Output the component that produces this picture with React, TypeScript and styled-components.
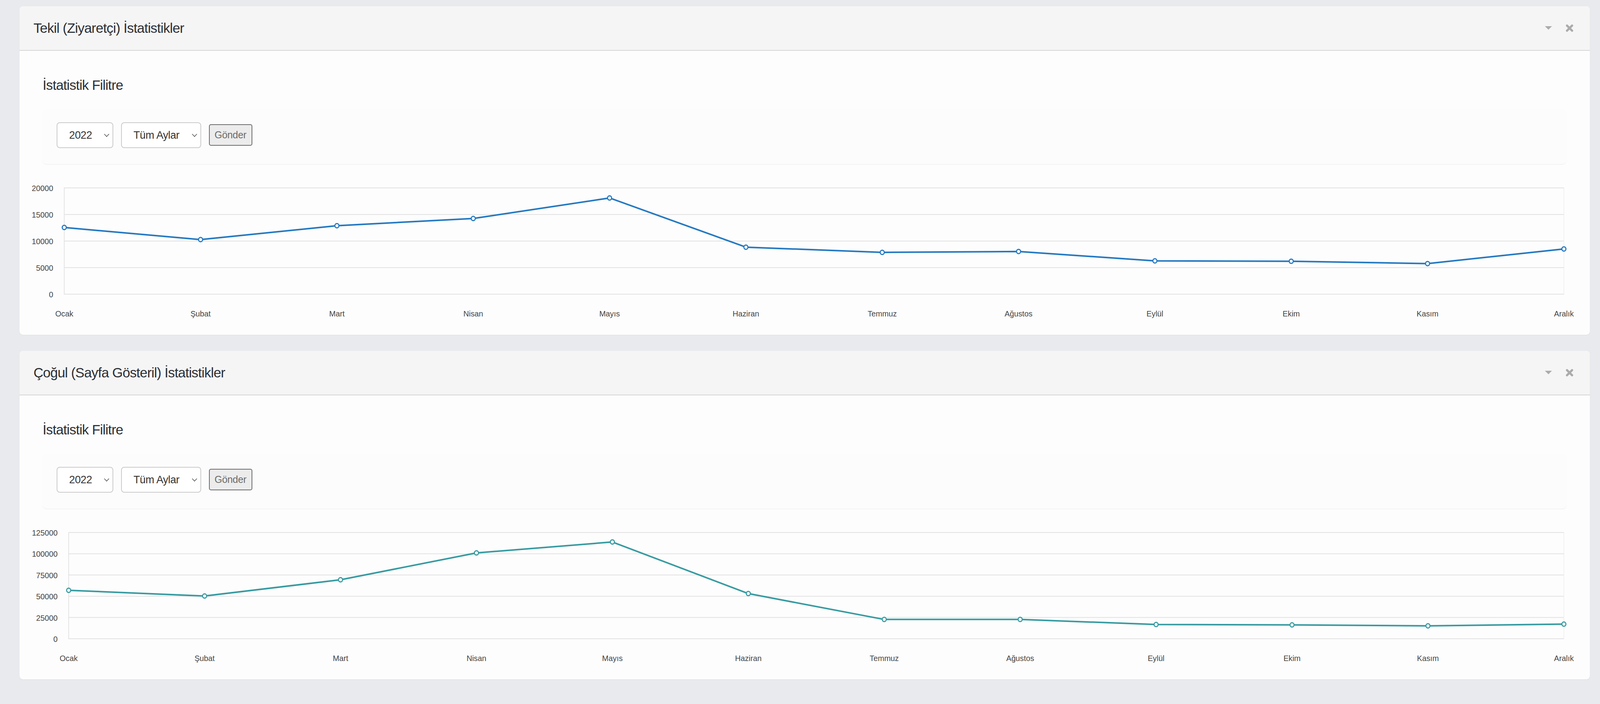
import React from 'react';
import styled, { createGlobalStyle } from 'styled-components';

// horizontal measures follow the 4352px-wide design, expressed relative to the viewport width
const vw = (px: number) => `${((px * 100) / 4352).toFixed(4)}vw`;

const GlobalStyle = createGlobalStyle`
  html, body {
    margin: 0;
    padding: 0;
    background: #e9eaee;
    font-family: "Liberation Sans", Arial, Helvetica, sans-serif;
    color: #2e3136;
    overflow: hidden;
  }
  * { box-sizing: border-box; }
`;

const Page = styled.div`
  display: flex;
  flex-direction: column;
  gap: 41px;
  padding: 16px ${vw(28)} 40px ${vw(53)};
`;

const Panel = styled.section`
  background: #fdfdfd;
  border-radius: 9px;
  box-shadow: 0 1px 2px rgba(0, 0, 0, 0.06);
  overflow: hidden;
`;

const PanelHeader = styled.header`
  display: flex;
  align-items: center;
  justify-content: space-between;
  height: 114px;
  padding: 0 ${vw(44)} 0 ${vw(38)};
  background: #f5f5f5;
  border-bottom: 2px solid #d6d6d6;
`;

const PanelTitle = styled.h2`
  margin: 0;
  font-size: 35px;
  font-weight: 400;
  letter-spacing: -0.8px;
  color: #2b2e34;
`;

const HeaderActions = styled.div`
  display: flex;
  align-items: center;
  gap: ${vw(37)};
`;

const IconButton = styled.span`
  display: inline-flex;
  align-items: center;
  justify-content: center;
  color: #ababab;
`;

const PanelBody = styled.div`
  padding: 68px ${vw(62)} 17px;
`;

const SectionTitle = styled.h3`
  margin: 0 0 42px 1px;
  font-size: 35px;
  font-weight: 400;
  letter-spacing: -0.9px;
  line-height: 40px;
  color: #2b2e34;
`;

const FilterWell = styled.form`
  display: flex;
  align-items: center;
  gap: ${vw(21)};
  height: 140px;
  margin: 0;
  padding: 0 ${vw(39)} 8px;
  background: #fcfcfc;
  border-radius: 12px;
  box-shadow: 0 2px 2px -1px rgba(0, 0, 0, 0.08), 0 0 1px rgba(0, 0, 0, 0.025);
`;

const SelectWrap = styled.div<{ $w: number }>`
  position: relative;
  flex: none;
  width: ${(p) => vw(p.$w)};
  height: 66px;
`;

const Select = styled.select`
  appearance: none;
  -webkit-appearance: none;
  width: 100%;
  height: 100%;
  padding: 0 0 0 ${vw(32)};
  border: 2px solid #cbcbcb;
  border-radius: 8px;
  background: #ffffff;
  font-family: "Liberation Sans", Arial, sans-serif;
  font-size: 27px;
  letter-spacing: -0.4px;
  color: #333;
  outline: none;
`;

const Chevron = styled.svg`
  position: absolute;
  right: ${vw(10)};
  top: 50%;
  margin-top: -4px;
  pointer-events: none;
`;

const SubmitButton = styled.button`
  flex: none;
  width: ${vw(118)};
  height: 55px;
  padding: 0;
  border: 2px solid #6d6d6d;
  border-radius: 5px;
  background: #ececec;
  font-family: "Liberation Sans", Arial, sans-serif;
  font-size: 25px;
  letter-spacing: -0.3px;
  color: #6b6b6b;
  cursor: pointer;
  margin-bottom: 1px;
`;

const ChartBox = styled.div`
  margin-top: 20px;
  height: 400px;
`;

const ChartSvg = styled.svg`
  display: block;
  width: 100%;
  height: 400px;
  overflow: visible;
  font-family: "Liberation Sans", Arial, sans-serif;
`;

const months = ['Ocak', 'Şubat', 'Mart', 'Nisan', 'Mayıs', 'Haziran', 'Temmuz', 'Ağustos', 'Eylül', 'Ekim', 'Kasım', 'Aralık'];

const W = 4147;
const H = 400;
const TOP = 41;
const BOTTOM = 313;
const RIGHT = 4139;

type ChartProps = { data: number[]; max: number; step: number; color: string; left: number };

function LineChart({ data, max, step, color, left }: ChartProps) {
  const ticks: number[] = [];
  for (let v = 0; v <= max; v += step) ticks.push(v);
  const y = (v: number) => BOTTOM - (v / max) * (BOTTOM - TOP);
  const x = (i: number) => left + (i * (RIGHT - left)) / 11;
  const pts = data.map((v, i) => `${x(i).toFixed(1)},${y(v).toFixed(1)}`).join(' ');
  return (
    <ChartSvg viewBox={`0 0 ${W} ${H}`} preserveAspectRatio="none">
      <line x1={RIGHT} y1={TOP} x2={RIGHT} y2={BOTTOM} stroke="#eeeeee" strokeWidth={1.5} />
      {ticks.map((t) => (
        <g key={t}>
          <line x1={left} y1={y(t)} x2={RIGHT} y2={y(t)} stroke="#e2e2e2" strokeWidth={2} />
          <text x={left - 30} y={y(t) + 8} textAnchor="end" fontSize={21} fill="#444">
            {t}
          </text>
        </g>
      ))}
      <line x1={left} y1={TOP - 1} x2={left} y2={BOTTOM + 1} stroke="#e2e2e2" strokeWidth={2} />
      {months.map((m, i) => (
        <text key={m} x={x(i)} y={370} textAnchor="middle" fontSize={21} fill="#444">
          {m}
        </text>
      ))}
      <polyline points={pts} fill="none" stroke={color} strokeWidth={4} strokeLinejoin="round" />
      {data.map((v, i) => (
        <circle key={i} cx={x(i)} cy={y(v)} r={5.5} fill="#fff" stroke={color} strokeWidth={3} />
      ))}
    </ChartSvg>
  );
}

function CaretIcon() {
  return (
    <svg width="18" height="10" viewBox="0 0 18 10">
      <path d="M0 0 H18 L9 9 Z" fill="currentColor" />
    </svg>
  );
}

function CloseIcon() {
  return (
    <svg width="20" height="20" viewBox="0 0 20 20">
      <path d="M3.5 3.5 L16.5 16.5 M16.5 3.5 L3.5 16.5" stroke="currentColor" strokeWidth={5.5} strokeLinecap="round" />
    </svg>
  );
}

function ChevronIcon() {
  return (
    <Chevron width="14" height="9" viewBox="0 0 14 9">
      <path d="M1 1 L7 7.5 L13 1" fill="none" stroke="#555" strokeWidth={1.6} />
    </Chevron>
  );
}

type StatPanelProps = { title: string; data: number[]; max: number; step: number; color: string; left: number };

function StatPanel({ title, data, max, step, color, left }: StatPanelProps) {
  return (
    <Panel>
      <PanelHeader>
        <PanelTitle>{title}</PanelTitle>
        <HeaderActions>
          <IconButton>
            <CaretIcon />
          </IconButton>
          <IconButton>
            <CloseIcon />
          </IconButton>
        </HeaderActions>
      </PanelHeader>
      <PanelBody>
        <SectionTitle>İstatistik Filitre</SectionTitle>
        <FilterWell onSubmit={(e) => e.preventDefault()}>
          <SelectWrap $w={154}>
            <Select defaultValue="2022">
              <option value="2022">2022</option>
              <option value="2021">2021</option>
              <option value="2020">2020</option>
            </Select>
            <ChevronIcon />
          </SelectWrap>
          <SelectWrap $w={218}>
            <Select defaultValue="all">
              <option value="all">Tüm Aylar</option>
              {months.map((m) => (
                <option key={m} value={m}>
                  {m}
                </option>
              ))}
            </Select>
            <ChevronIcon />
          </SelectWrap>
          <SubmitButton type="submit">Gönder</SubmitButton>
        </FilterWell>
        <ChartBox>
          <LineChart data={data} max={max} step={step} color={color} left={left} />
        </ChartBox>
      </PanelBody>
    </Panel>
  );
}

const uniqueData = [12551, 10272, 12890, 14240, 18110, 8846, 7868, 8037, 6272, 6199, 5757, 8507];
const pageViewData = [56985, 50276, 69393, 100965, 113833, 53170, 22700, 22750, 16727, 16268, 15165, 17187];

export default function App() {
  return (
    <>
      <GlobalStyle />
      <Page>
        <StatPanel title="Tekil (Ziyaretçi) İstatistikler" data={uniqueData} max={20000} step={5000} color="#2479c1" left={60} />
        <StatPanel title="Çoğul (Sayfa Gösteril) İstatistikler" data={pageViewData} max={125000} step={25000} color="#379ba1" left={72} />
      </Page>
    </>
  );
}
